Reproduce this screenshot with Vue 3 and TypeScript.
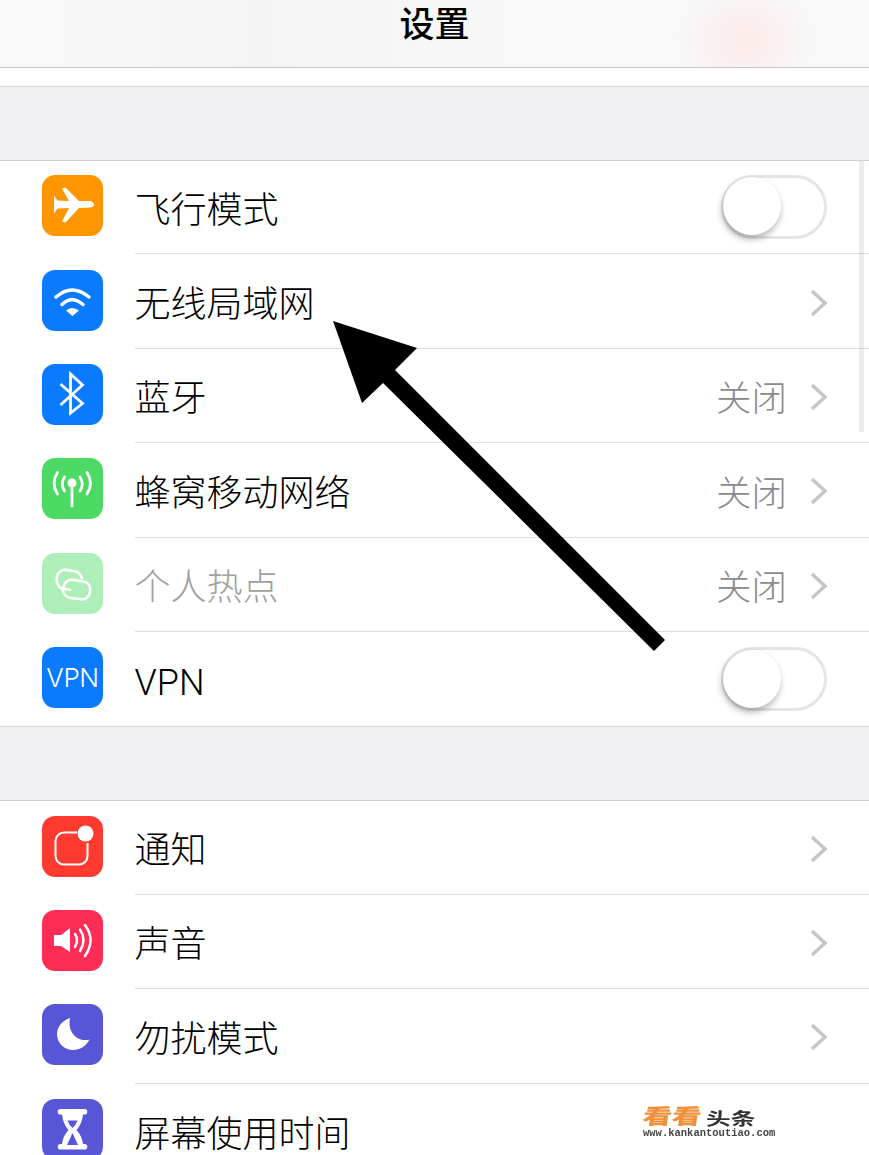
<script setup lang="ts">
interface Row {
  icon: string
  label: string
  color: string
  detail?: string
  toggle?: boolean
  chevron?: boolean
  muted?: boolean
}

const networkRows: Row[] = [
  { icon: 'plane', label: '飞行模式', color: '#ff9500', toggle: true },
  { icon: 'wifi', label: '无线局域网', color: '#0a7aff', chevron: true },
  { icon: 'bluetooth', label: '蓝牙', color: '#0a7aff', detail: '关闭', chevron: true },
  { icon: 'cell', label: '蜂窝移动网络', color: '#4cd964', detail: '关闭', chevron: true },
  { icon: 'hotspot', label: '个人热点', color: '#aeeeb8', detail: '关闭', chevron: true, muted: true },
  { icon: 'vpn', label: 'VPN', color: '#0a7aff', toggle: true },
]

const systemRows: Row[] = [
  { icon: 'notice', label: '通知', color: '#ff3b30', chevron: true },
  { icon: 'sound', label: '声音', color: '#ff2d55', chevron: true },
  { icon: 'moon', label: '勿扰模式', color: '#5856d6', chevron: true },
  { icon: 'hourglass', label: '屏幕使用时间', color: '#5856d6' },
]

const groups: Row[][] = [networkRows, systemRows]
</script>

<template>
  <div class="page">
    <header class="nav">
      <h1 class="nav__title">设置</h1>
    </header>
    <div class="strip"></div>

    <template v-for="(rows, g) in groups" :key="g">
      <div class="gap"></div>
      <section class="group">
        <div v-for="row in rows" :key="row.label" class="row">
          <div class="row__icon" :style="{ background: row.color }">
            <span v-if="row.icon === 'vpn'" class="vpn">VPN</span>
            <svg v-else viewBox="0 0 61 61" width="61" height="61">
              <path
                v-if="row.icon === 'plane'"
                fill="#fff"
                d="M12 20.500 L15.500 25.500 L27 26 L20 13.500 L23.500 12.500 L37 26 L48 26 Q52 27 52 29.500 Q52 32 48 32.500 L37 33 L23.500 47.500 L20 46.500 L27 33 L15.500 33.500 L12 38.500 Z"
              />
              <g v-else-if="row.icon === 'wifi'" fill="none" stroke="#fff" stroke-width="3.500" stroke-linecap="round">
                <path d="M14 27 Q30 13 47 27" />
                <path d="M20 34.500 Q30 25 41 34.500" />
                <path fill="#fff" stroke="none" d="M24 40.500 Q30 35.500 37 40.500 L30.500 46 Z" />
              </g>
              <path
                v-else-if="row.icon === 'bluetooth'"
                fill="none"
                stroke="#fff"
                stroke-width="2.800"
                d="M18.500 20 L40.500 39.500 L28.500 49 V10 L40.500 21 L18.500 41"
              />
              <g v-else-if="row.icon === 'cell'" fill="none" stroke="#fff" stroke-width="2.800" stroke-linecap="round">
                <circle cx="30" cy="25" r="4.500" fill="#fff" stroke="none" />
                <path d="M30 27 V48" />
                <path d="M15.500 14.500 Q8.500 25 15.500 36" />
                <path d="M22.500 19 Q18 26 22.500 33" />
                <path d="M45 14.500 Q52 25 45 36" />
                <path d="M38 19 Q42.500 26 38 33" />
              </g>
              <g v-else-if="row.icon === 'hotspot'" transform="rotate(8 31 31)" fill="none" stroke="#fff" stroke-width="2.600" stroke-linecap="round">
                <path d="M39 24 C37 20 34 18 30 18 H22 C17 18 14 22 14 27 C14 33 18 37 22 37 H29" />
                <path d="M22 36 C22 31 25 27 30 27 H41 C46 27 49 31 49 36 C49 41 46 45 41 45 H30 C26 45 23 42 22 39" />
              </g>
              <g v-else-if="row.icon === 'notice'">
                <path fill="none" stroke="#fff" stroke-width="2" d="M35 16.500 H22 a8.500 8.500 0 0 0 -8.500 8.500 V40 a8.500 8.500 0 0 0 8.500 8.500 H37 a8.500 8.500 0 0 0 8.500 -8.500 V27" />
                <circle cx="43.500" cy="17.500" r="8" fill="#fff" />
              </g>
              <g v-else-if="row.icon === 'sound'" fill="none" stroke="#fff" stroke-width="2.500" stroke-linecap="round">
                <path fill="#fff" stroke="none" d="M12 25 H19 L28 18 V42 L19 36 H12 Z" />
                <path d="M33 24 Q37 30 33 37" />
                <path d="M38 19.500 Q45 30 38 41" />
                <path d="M43 15 Q54 30 43 46" />
              </g>
              <path
                v-else-if="row.icon === 'moon'"
                fill="#fff"
                d="M28 14 C19 17 15 24 15 30 C15 39 22 46 31 46 C38 46 44 42 47.500 35.500 C37 38.500 25 30 28 14 Z"
              />
              <g v-else-if="row.icon === 'hourglass'">
                <path fill="#fff" d="M18.500 10 H42.500 a2.800 2.800 0 0 1 0 5.600 H41 Q40 25 34.500 31 Q40 37 41 45 H42.500 a2.800 2.800 0 0 1 0 5.600 H18.500 a2.800 2.800 0 0 1 0 -5.600 H20 Q21 37 26.500 31 Q21 25 20 15.600 H18.500 a2.800 2.800 0 0 1 0 -5.600 Z" />
                <path fill="#5856d6" d="M25.500 21.500 H35.500 Q34 26 30.500 29 Q27 26 25.500 21.500 Z" />
                <path fill="#5856d6" d="M30.500 34 L36 46 H25 Z" />
              </g>
            </svg>
          </div>
          <div class="row__body">
            <span class="row__label" :class="{ 'row__label--muted': row.muted }">{{ row.label }}</span>
            <span v-if="row.detail" class="row__detail">{{ row.detail }}</span>
            <span v-if="row.toggle" class="switch"><span class="switch__knob"></span></span>
            <svg v-if="row.chevron" class="chevron" viewBox="0 0 18 28" width="18" height="28">
              <path d="M2 2 L15 14 L2 26" fill="none" stroke="#c5c5c8" stroke-width="3.500" />
            </svg>
          </div>
        </div>
      </section>
    </template>

    <span class="scrollbar"></span>

    <svg class="arrow" viewBox="0 0 869 1155" width="869" height="1155">
      <path fill="#000" d="M333 321 L417 348 L395 370 L665 640 L654 651 L383 383 L362 403 Z" />
    </svg>

    <div class="mark">
      <div class="mark__top">
        <span class="mark__see">看看</span>
        <span class="mark__head">头条</span>
      </div>
      <div class="mark__url">www.kankantoutiao.com</div>
    </div>
  </div>
</template>

<style scoped>
.page {
  position: relative;
  width: 869px;
  height: 1155px;
  overflow: hidden;
  background: #fff;
  font-family: "Noto Sans CJK SC", "Noto Sans", sans-serif;
  color: #000;
}

.nav {
  height: 67px;
  background:
    radial-gradient(ellipse 70px 60px at 745px 40px, #fbeae8, rgba(251, 234, 232, 0)),
    linear-gradient(90deg, #f9f9f9, #f4f4f5 30%, #f8f8f9 60%, #f8f8f9);
  border-bottom: 1px solid #c8c7cc;
}

.nav__title {
  margin: 0;
  text-align: center;
  font-size: 35px;
  font-weight: 500;
  line-height: 44px;
}

.strip {
  height: 18px;
}

.gap {
  height: 73px;
  background: #efeff4;
  border-top: 1px solid #d4d4d8;
  border-bottom: 1px solid #d0d0d5;
}

.group + .gap {
  border-top: 0;
}

.group {
  margin-top: -1px;
}

.row {
  display: flex;
  height: 94.4px;
}

.row__icon {
  flex: none;
  display: flex;
  align-items: center;
  justify-content: center;
  width: 61px;
  height: 61px;
  margin: 15.2px 31.5px 0 42px;
  border-radius: 13px;
}

.vpn {
  color: #fff;
  font-family: Inter, sans-serif;
  font-size: 26px;
  font-weight: 300;
  letter-spacing: -0.4px;
}

.row__body {
  flex: 1;
  display: flex;
  align-items: center;
  padding-right: 42px;
  border-bottom: 1px solid #dededf;
}

.row:last-child .row__body {
  border-bottom: 0;
}

.group:first-of-type {
  border-bottom: 1px solid #d4d4d8;
}

.row__label {
  flex: 1;
  padding-top: 8px;
  font-family: Roboto, "Noto Sans CJK SC", sans-serif;
  font-size: 36px;
  font-weight: 300;
  line-height: 44px;
}

.row__label--muted {
  color: #a0a0a0;
}

.row__detail {
  margin-right: 23px;
  padding-top: 2px;
  font-size: 35.5px;
  font-weight: 300;
  line-height: 44px;
  color: #8a8a8e;
}

.chevron {
  flex: none;
  margin-top: 3px;
  margin-right: -1px;
}

.switch {
  position: relative;
  flex: none;
  width: 106px;
  height: 64px;
  box-sizing: border-box;
  border: 3.5px solid #e5e5e6;
  border-radius: 32px;
}

.switch__knob {
  position: absolute;
  left: -1.5px;
  top: -0.5px;
  width: 58px;
  height: 58px;
  border-radius: 50%;
  background: #fff;
  box-shadow: -1px 4px 7px rgba(0, 0, 0, 0.3);
}

.scrollbar {
  position: absolute;
  left: 859px;
  top: 161px;
  width: 5px;
  height: 271px;
  background: rgba(0, 0, 0, 0.07);
}

.arrow {
  position: absolute;
  left: 0;
  top: 0;
}

.mark {
  position: absolute;
  left: 643px;
  top: 1103px;
  width: 134px;
  filter: blur(0.4px);
}

.mark__top {
  display: flex;
  align-items: center;
  height: 24px;
}

.mark__see {
  width: 63px;
  font-size: 21px;
  font-weight: 900;
  line-height: 24px;
  color: #f0913a;
  white-space: nowrap;
  transform-origin: left center;
  transform: scaleX(1.4) skewX(-6deg);
}

.mark__head {
  font-size: 17px;
  font-weight: 700;
  line-height: 24px;
  color: #333;
  white-space: nowrap;
  transform-origin: left center;
  transform: translateY(3px) scaleX(1.45);
}

.mark__url {
  margin-top: 1px;
  font-family: "Liberation Mono", monospace;
  font-size: 10.5px;
  font-weight: 700;
  line-height: 11px;
  color: #444;
  white-space: nowrap;
}
</style>
